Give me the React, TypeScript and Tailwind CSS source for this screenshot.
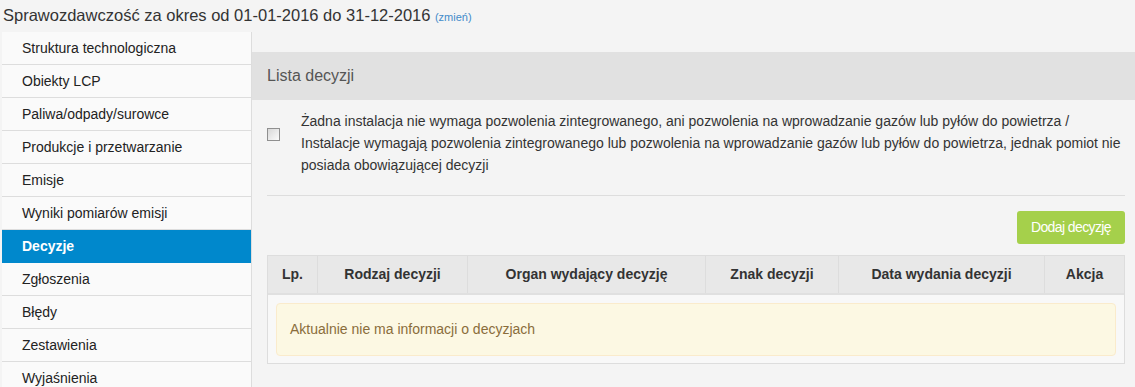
import React from "react";

const items = [
  "Struktura technologiczna",
  "Obiekty LCP",
  "Paliwa/odpady/surowce",
  "Produkcje i przetwarzanie",
  "Emisje",
  "Wyniki pomiarów emisji",
  "Decyzje",
  "Zgłoszenia",
  "Błędy",
  "Zestawienia",
  "Wyjaśnienia",
];

const cols = [
  "Lp.",
  "Rodzaj decyzji",
  "Organ wydający decyzję",
  "Znak decyzji",
  "Data wydania decyzji",
  "Akcja",
];

export default function App() {
  return (
    <div className="min-h-screen w-[1135px] overflow-hidden bg-[#f4f4f4] font-['Liberation_Sans',Arial,sans-serif] text-[#333]">
      <div className="h-[32px] pl-[3px] pt-[3px]">
        <span className="text-[16.5px] text-[#333]">
          Sprawozdawczość za okres od 01-01-2016 do 31-12-2016
        </span>{" "}
        <a className="text-[11px] text-[#428bca]">(zmień)</a>
      </div>
      <div className="flex">
        <nav className="ml-[2px] w-[250px] shrink-0 border-r border-[#ddd] bg-[#fafafa]">
          {items.map((it) => {
            const active = it === "Decyzje";
            return (
              <div
                key={it}
                className={
                  active
                    ? "flex h-[33px] items-center border-b border-[#0088cc] bg-[#0088cc] pl-[20px] text-[14px] font-bold text-white"
                    : "flex h-[33px] items-center border-b border-[#ddd] pl-[20px] text-[14px] text-[#222]"
                }
              >
                {it}
              </div>
            );
          })}
        </nav>
        <main className="flex-1 pt-[20px]">
          <div className="flex h-[48px] items-center bg-[#e1e1e1] pl-[15px] text-[16px] text-[#555]">
            Lista decyzji
          </div>
          <div className="pl-[15px] pr-[10px]">
            <div className="mt-[10px] flex">
              <div className="w-[34px] shrink-0 pt-[18px]">
                <span className="block h-[13px] w-[13px] border border-[#8f8f8f] bg-gradient-to-br from-[#d8d8d8] to-[#fbfbfb]" />
              </div>
              <p className="text-[14px] leading-[22px] text-[#333]">
                Żadna instalacja nie wymaga pozwolenia zintegrowanego, ani pozwolenia na wprowadzanie gazów lub pyłów do powietrza /
                <br />
                Instalacje wymagają pozwolenia zintegrowanego lub pozwolenia na wprowadzanie gazów lub pyłów do powietrza, jednak pomiot nie posiada obowiązującej decyzji
              </p>
            </div>
            <div className="mt-[19px] border-t border-[#ddd]" />
            <div className="mt-[15px] flex justify-end">
              <button className="h-[33px] w-[108px] rounded-[3px] bg-[#a5d04b] text-[14px] tracking-[-0.6px] text-white">
                Dodaj decyzję
              </button>
            </div>
            <div className="mt-[11px] border border-[#ddd]">
              <div className="grid h-[39px] grid-cols-[50px_150px_238px_133px_206px_79px] border-b-2 border-[#e0e0e0] bg-[#e8e8e8]">
                {cols.map((c, i) => (
                  <div
                    key={c}
                    className={
                      i < cols.length - 1
                        ? "flex items-center justify-center border-r border-[#ddd] text-[14px] font-bold text-[#333]"
                        : "flex items-center justify-center text-[14px] font-bold text-[#333]"
                    }
                  >
                    {c}
                  </div>
                ))}
              </div>
              <div className="bg-[#f8f8f8] px-[8px] pb-[7px] pt-[8px]">
                <div className="flex h-[53px] items-center rounded-[4px] border border-[#faebcc] bg-[#fcf8e3] pl-[13px] text-[14px] text-[#8a6d3b]">
                  Aktualnie nie ma informacji o decyzjach
                </div>
              </div>
            </div>
          </div>
        </main>
      </div>
    </div>
  );
}
